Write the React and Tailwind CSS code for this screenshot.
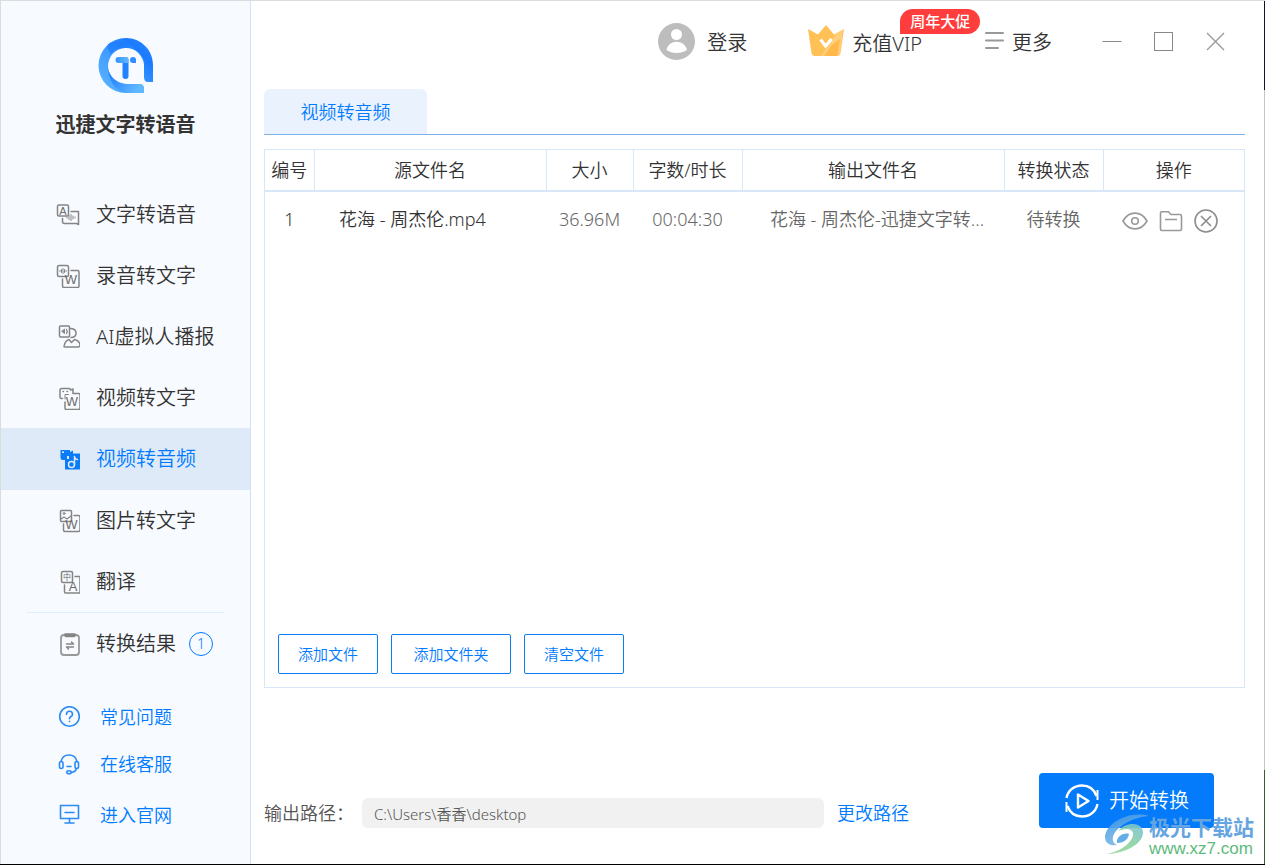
import { useState } from 'react'

const font = "font-['Noto_Sans','Noto_Sans_CJK_SC',sans-serif]"

function Logo() {
  return (
    <svg viewBox="0 0 56 56" className="size-14" aria-hidden="true">
      <defs>
        <linearGradient id="ring" x1="0" y1="1" x2="1" y2="0">
          <stop offset="0" stopColor="#5fb9ff" />
          <stop offset="0.45" stopColor="#3f9bff" />
          <stop offset="0.75" stopColor="#1a7bff" />
          <stop offset="1" stopColor="#2b88ff" />
        </linearGradient>
        <linearGradient id="tail" x1="0" y1="0" x2="1" y2="0.5">
          <stop offset="0" stopColor="#1677ff" />
          <stop offset="1" stopColor="#60b8ff" />
        </linearGradient>
        <linearGradient id="top" x1="0" y1="0" x2="1" y2="0.3">
          <stop offset="0" stopColor="#1273ff" />
          <stop offset="0.5" stopColor="#1a7bff" />
          <stop offset="1" stopColor="#4da8ff" />
        </linearGradient>
        <linearGradient id="bar" x1="0" y1="0" x2="1" y2="0">
          <stop offset="0" stopColor="#3394ff" />
          <stop offset="1" stopColor="#63b8ff" />
        </linearGradient>
      </defs>
      <path
        d="M28 0C43 0 55 12 55 27V44H50Q46 44 46 39V27A18 18 0 1 0 28 46H41Q46 46 46 51V55H28A27.500 27.500 0 0 1 28 0Z"
        fill="url(#ring)"
      />
      <path d="M10 30C11 45 20 55 30 55H46V51Q46 46 41 46H28C18 45 11 38 10 30Z" fill="url(#tail)" />
      <path d="M10 6C20 0 37 3 46 25A18 18 0 0 0 28 9C22 9 17 11 13 16C10 12 9 9 10 6Z" fill="url(#top)" opacity="0.55" />
      <rect x="24.500" y="19" width="6" height="22" rx="3" fill="#2383ff" />
      <path d="M17.500 22a3 3 0 0 1 3-3h8q2 0 2 3v3h-10a3 3 0 0 1-3-3Z" fill="url(#bar)" />
      <path d="M32 22a3 3 0 0 1 6 0v3h-3a3 3 0 0 1-3-3Z" fill="#2f8cff" />
    </svg>
  )
}

function IconBase({ children }) {
  return (
    <svg
      viewBox="0 0 24 24"
      className="size-6 shrink-0"
      fill="none"
      stroke="#858585"
      strokeWidth="1.5"
      strokeLinejoin="round"
      strokeLinecap="round"
      aria-hidden="true"
    >
      {children}
    </svg>
  )
}

function Letter({ x, y, size, children }) {
  return (
    <text
      x={x}
      y={y}
      fontSize={size}
      textAnchor="middle"
      fill="#6b6b6b"
      stroke="none"
      className="font-['Liberation_Sans','Noto_Sans_CJK_SC',sans-serif] font-normal"
    >
      {children}
    </text>
  )
}

function TextVoiceIcon() {
  return (
    <IconBase>
      <rect x="1.500" y="2" width="11" height="11" rx="1.500" />
      <Letter x={7} y={11.5} size={11}>A</Letter>
      <path d="M15 8.500h7.500v13l-2-1H8.500q-2 0-2-2V15.500" />
      <path d="M11 14v1M13 12.500v4M15 11.500v6M17 13v3M19 14v1" strokeWidth="1" />
    </IconBase>
  )
}

function VoiceTextIcon() {
  return (
    <IconBase>
      <rect x="1.500" y="1.500" width="11" height="11" rx="1.500" />
      <path d="M4 6.500v1M5.500 5.500v3M7 4.500v5M8.500 5.500v3M10 6.500v1" strokeWidth="1" />
      <path d="M15 6.500h6.500q1.500 0 1.500 1.500V22q0 1.500-1.500 1.500H8q-1.500 0-1.500-1.500v-7" />
      <Letter x={15} y={19.5} size={13}>W</Letter>
    </IconBase>
  )
}

function PersonIcon() {
  return (
    <IconBase>
      <rect x="3.500" y="1" width="10" height="11" rx="1" />
      <path d="M8.500 4.500v4L6 6.500zM10.500 4q2 2.500 0 5" strokeWidth="1" fill="#858585" />
      <path d="M14 3.500c8 0 8 9 1 9" />
      <path d="M8 21.500q1-6 5-7l2.500 3 3-3q5 1 5.500 5.500 0 2-2 2H9q-1 0-1-.5z" />
    </IconBase>
  )
}

function VideoTextIcon() {
  return (
    <IconBase>
      <path d="M6.500 12.500H5.500q-1.500 0-1.500-1.500V4q0-1.500 1.500-1.500H13q1.500 0 1.500 1.500l2.500-1V7" />
      <path d="M7 5.500h.5M11 5.500h.5" />
      <path d="M17 7.500h6q1 0 1 1V22q0 1.500-1.500 1.500h-12Q9 23.500 9 22v-6" />
      <path d="M9 13V8.500h3.500" strokeWidth="1" />
      <Letter x={16} y={20} size={13}>W</Letter>
    </IconBase>
  )
}

function VideoAudioIcon() {
  return (
    <IconBase>
      <path d="M4.500 3H14v2l3-1.500V9h-6v4H7q-2.500 0-2.500-2Z" fill="#0a7cf7" stroke="none" />
      <rect x="6" y="4.500" width="2" height="1.500" fill="#e6f1fd" stroke="none" />
      <path d="M13 6.500h12V22.500H9V12h4Z" fill="#0a7cf7" stroke="none" />
      <circle cx="15.500" cy="17.500" r="3" stroke="#deeaf8" />
      <path d="M18.500 17.500V9.500q.5 3 3 3" stroke="#deeaf8" />
    </IconBase>
  )
}

function ImageTextIcon() {
  return (
    <IconBase>
      <rect x="4.500" y="1.500" width="11" height="11" rx="1" />
      <path d="M5 10l3-2 3 2 4-3" strokeWidth="1.200" />
      <circle cx="8" cy="4.500" r="1" strokeWidth="1" />
      <path d="M18 6.500h4.500q1.500 0 1.500 1.500V21q0 1.500-1.500 1.500H9q-1.500 0-1.500-1.500v-6" />
      <Letter x={15.5} y={19.5} size={13}>W</Letter>
    </IconBase>
  )
}

function TranslateIcon() {
  return (
    <IconBase>
      <rect x="5.500" y="1.500" width="11" height="11" rx="1.500" />
      <Letter x={11} y={10} size={8}>中</Letter>
      <path d="M19 6.500h5v16.500H9.500Q8.500 23 8.500 22v-7" />
      <Letter x={17} y={20.5} size={13}>A</Letter>
    </IconBase>
  )
}

function ResultIcon() {
  return (
    <IconBase>
      <rect x="5" y="3" width="18" height="20" rx="3" strokeWidth="1.800" stroke="#999" />
      <path d="M9 2h10v1.500q0 1-1 1h-8q-1 0-1-1Z" fill="#858585" />
      <path d="M10.500 12h7l-2-2M17.500 15h-7l2 2" />
    </IconBase>
  )
}

const items = [
  { label: '文字转语音', icon: TextVoiceIcon },
  { label: '录音转文字', icon: VoiceTextIcon },
  { label: 'AI虚拟人播报', icon: PersonIcon },
  { label: '视频转文字', icon: VideoTextIcon },
  { label: '视频转音频', icon: VideoAudioIcon },
  { label: '图片转文字', icon: ImageTextIcon },
  { label: '翻译', icon: TranslateIcon }
]

function Sidebar() {
  const [active, setActive] = useState('视频转音频')

  return (
    <aside className="flex w-[251px] shrink-0 flex-col border-r border-l border-r-[#cfe2f7] border-l-[#dcdcdc] bg-[#f7faff]">
      <div className="flex flex-col items-center pt-[37px]">
        <Logo />
        <h1 className="mt-4 text-xl leading-[30px] font-bold text-[#333]">迅捷文字转语音</h1>
      </div>

      <nav className="mt-11 flex flex-col">
        {items.map(({ label, icon: Icon }) => (
          <button
            key={label}
            onClick={() => setActive(label)}
            className={
              active === label
                ? 'flex h-[62px] items-center gap-4 bg-[#deeaf8] pl-[55px] text-xl text-[#007bff]'
                : 'flex h-[61px] items-center gap-4 pl-[55px] text-xl text-[#333]'
            }
          >
            <Icon />
            {label}
          </button>
        ))}

        <div className="mx-[26px] h-px bg-[#e2edfb]" />

        <button className="flex h-[61px] items-center gap-4 pl-[55px] text-xl text-[#333]">
          <ResultIcon />
          转换结果
          <span className="-ml-[3px] flex size-6 items-center justify-center rounded-full border border-[#007bff] text-sm text-[#007bff]">
            1
          </span>
        </button>
      </nav>

      <div className="mt-[19px] flex flex-col text-lg text-[#007bff]">
        <a href="#faq" className="flex h-[47px] items-center gap-5 pl-[57px]">
          <svg viewBox="0 0 22 22" className="size-[22px]" fill="none" stroke="#2b8cf5" strokeWidth="1.600" strokeLinecap="round" aria-hidden="true">
            <circle cx="11.500" cy="10.500" r="9.800" />
            <path d="M8.500 8.500q0-3.200 3-3.200t3 3q0 1.700-1.800 2.500-1.200.6-1.200 2M11.500 15.300v.2" />
          </svg>
          常见问题
        </a>
        <a href="#service" className="flex h-[47px] items-center gap-5 pl-[57px]">
          <svg viewBox="0 0 22 22" className="size-[22px]" fill="none" stroke="#2b8cf5" strokeWidth="1.600" strokeLinecap="round" aria-hidden="true">
            <path d="M3 8.500C4 4 7 2 11 2S18 4 19 8.500" />
            <rect x="1.500" y="8.500" width="3.500" height="7" rx="1.700" />
            <rect x="17" y="8.500" width="3.500" height="7" rx="1.700" />
            <path d="M18.500 15.500q-1 3.500-5 4M9 13.500h4" />
            <ellipse cx="11" cy="19.300" rx="2.200" ry="1.500" />
          </svg>
          在线客服
        </a>
        <a href="#site" className="mt-1 flex h-[47px] items-center gap-5 pl-[57px]">
          <svg viewBox="0 0 22 22" className="size-[22px]" fill="none" stroke="#2b8cf5" strokeWidth="1.600" strokeLinecap="round" strokeLinejoin="round" aria-hidden="true">
            <rect x="2.500" y="1.500" width="18" height="13" />
            <path d="M7 8.500h9M11.500 14.500V18.500M7 19h9" />
          </svg>
          进入官网
        </a>
      </div>
    </aside>
  )
}

function TopBar() {
  return (
    <header className="flex h-20 items-center justify-end pr-[38px] text-xl text-[#333]">
      <button className="flex items-center gap-3">
        <svg viewBox="0 0 37 37" className="size-[37px]" aria-hidden="true">
          <circle cx="18.500" cy="18.500" r="18.500" fill="#bdbdbd" />
          <circle cx="18.500" cy="11.500" r="5.500" fill="#fff" />
          <path d="M8.500 27c2-11 18-11 20.500 0-6 4-15 4-20.500 0Z" fill="#fff" />
        </svg>
        <span className="pt-[3px]">登录</span>
      </button>

      <button className="relative ml-[61px] flex items-center gap-2">
        <svg viewBox="0 0 36 32" className="h-8 w-9" aria-hidden="true">
          <path d="M0 4l10 5.500L18 0l8 9.500L36 4l-3.500 24q-.5 3-3.500 3H7q-3 0-3.500-3Z" fill="#ffc056" />
          <path d="M28 9l7-4-3 23q-.5 3-3 3H13Z" fill="#ffd48a" opacity="0.700" />
          <path d="M24 20l8-6-2.500 17H16Z" fill="#ffb94a" />
          <path d="M12.500 14.500l5 6.500 6-7" fill="none" stroke="#fff" strokeWidth="3" />
        </svg>
        <span className="pt-[5px]">充值VIP</span>
        <span className="absolute -top-4 left-[92px] flex h-[25px] w-20 items-center justify-center rounded-t-full rounded-br-full rounded-bl-none bg-[#ff3d3d] text-[15px] font-medium text-white">
          周年大促
        </span>
      </button>

      <button className="ml-[62px] flex items-center gap-2">
        <svg viewBox="0 0 20 20" className="size-5" stroke="#999" strokeWidth="2" strokeLinecap="round" aria-hidden="true">
          <path d="M2 2h17M2 9.500h17M2 17h12" />
        </svg>
        <span className="pt-[3px]">更多</span>
      </button>

      <div className="ml-[50px] flex gap-8">
        <button aria-label="最小化" className="size-5">
          <svg viewBox="0 0 20 20" stroke="#888" aria-hidden="true">
            <path d="M.5 10.500h19" />
          </svg>
        </button>
        <button aria-label="最大化" className="size-5">
          <svg viewBox="0 0 20 20" fill="none" stroke="#888" aria-hidden="true">
            <rect x=".5" y="1.500" width="18" height="18" />
          </svg>
        </button>
        <button aria-label="关闭" className="size-5">
          <svg viewBox="0 0 20 20" stroke="#999" strokeWidth="1.300" aria-hidden="true">
            <path d="M1 2l17 17M18 2L1 19" />
          </svg>
        </button>
      </div>
    </header>
  )
}

function FileTable() {
  return (
    <table className="w-full table-fixed border-collapse text-center text-lg text-[#333]">
      <colgroup>
        <col className="w-[49px]" />
        <col className="w-[232px]" />
        <col className="w-[87px]" />
        <col className="w-[109px]" />
        <col />
        <col className="w-[99px]" />
        <col className="w-[141px]" />
      </colgroup>
      <thead>
        <tr className="h-[41px] border-b-2 border-[#d8e7f8] [&>th]:border-r [&>th]:border-[#d8e7f8] [&>th]:font-[350] [&>th:last-child]:border-r-0">
          <th>编号</th>
          <th>源文件名</th>
          <th>大小</th>
          <th>字数/时长</th>
          <th>输出文件名</th>
          <th>转换状态</th>
          <th>操作</th>
        </tr>
      </thead>
      <tbody>
        <tr className="h-[54px] text-[#666]">
          <td className="text-[#333]">1</td>
          <td className="pl-[25px] text-left text-[#333]">花海 - 周杰伦.mp4</td>
          <td>36.96M</td>
          <td>00:04:30</td>
          <td className="pl-2 whitespace-nowrap">花海 - 周杰伦-迅捷文字转...</td>
          <td>待转换</td>
          <td>
            <div className="flex items-center justify-center gap-[11px] pt-1 pr-2">
              <button aria-label="预览">
                <svg viewBox="0 0 26 24" className="h-6 w-[26px]" fill="none" stroke="#999" strokeWidth="1.600" aria-hidden="true">
                  <path d="M1 12C7 1.500 19 1.500 25 12 19 22.500 7 22.500 1 12Z" />
                  <circle cx="13" cy="12" r="3.300" />
                </svg>
              </button>
              <button aria-label="打开文件夹">
                <svg viewBox="0 0 24 24" className="size-6" fill="none" stroke="#999" strokeWidth="1.600" strokeLinejoin="round" aria-hidden="true">
                  <path d="M1.500 4q0-1.200 1.200-1.200H9.500l2.500 2.700h9q1.500 0 1.500 1.500v13q0 1.500-1.500 1.500H3q-1.500 0-1.500-1.500ZM6 10.500h12" />
                </svg>
              </button>
              <button aria-label="删除">
                <svg viewBox="0 0 24 24" className="size-6" fill="none" stroke="#8c8c8c" strokeWidth="1.600" aria-hidden="true">
                  <circle cx="12" cy="12" r="11" />
                  <path d="M7 7l10 10M17 7L7 17" />
                </svg>
              </button>
            </div>
          </td>
        </tr>
      </tbody>
    </table>
  )
}

function Watermark() {
  return (
    <div className="pointer-events-none absolute right-[11px] bottom-[7px] flex items-center">
      <svg viewBox="0 0 46 42" className="h-[42px] w-[46px]" aria-hidden="true">
        <defs>
          <linearGradient id="swirl" x1="0" y1="0" x2="0.500" y2="1">
            <stop offset="0" stopColor="#3c96e4" />
            <stop offset="1" stopColor="#7fbbe8" />
          </linearGradient>
          <linearGradient id="leaf" x1="1" y1="0" x2="0" y2="1">
            <stop offset="0" stopColor="#7cc3d8" />
            <stop offset="0.500" stopColor="#8ad2a0" />
            <stop offset="1" stopColor="#9cdc9c" />
          </linearGradient>
        </defs>
        <path d="M46 2C26-4 3 9 2 23c0 7 6 9 12 8C8 28 8 21 16 14 24 7 34 3 46 2Z" fill="url(#swirl)" opacity="0.900" />
        <path d="M15 17C22 9 33 8 38 13c8 10-8 26-34 27 15-3 27-13 26-21-2-6-10-4-15-2Z" fill="url(#leaf)" opacity="0.900" />
        <path d="M14 29c-1-6 6-11 12-9-1 6-6 9-12 9Z" fill="#62aee6" />
      </svg>
      <div className="font-bold">
        <p className="text-[21px] leading-7 text-[#66a5e0]">极光下载站</p>
        <p className="font-['Liberation_Sans',sans-serif] text-[17px] leading-4 font-normal text-[#5dba7c]">www.xz7.com</p>
      </div>
    </div>
  )
}

function App() {
  return (
    <div className={`${font} relative flex min-h-screen border-t border-b border-t-[#dcdcdc] border-b-black bg-white font-[350]`}>
      <Sidebar />

      <main className="flex min-w-0 flex-1 flex-col pl-[13px]">
        <TopBar />

        <div className="mt-2 mr-[19px] border-b border-[#7fb2e8]">
          <button className="h-[45px] w-[163px] rounded-t-md bg-[#eaf2fe] text-lg text-[#007bff]">
            视频转音频
          </button>
        </div>

        <section className="mt-[14px] mr-[19px] flex flex-1 flex-col justify-between border border-[#d8e7f8]">
          <FileTable />

          <div className="flex gap-[13px] px-[13px] pb-[13px] text-[15px] text-[#007bff]">
            <button className="h-10 w-[100px] rounded-xs border border-[#0a7cf7]">添加文件</button>
            <button className="h-10 w-[120px] rounded-xs border border-[#0a7cf7]">添加文件夹</button>
            <button className="h-10 w-[100px] rounded-xs border border-[#0a7cf7]">清空文件</button>
          </div>
        </section>

        <footer className="mt-[85px] mr-[50px] flex items-end justify-between pb-9 text-lg">
          <div className="flex h-[30px] flex-1 items-center">
            <label htmlFor="path" className="w-[98px] shrink-0 text-[#555]">输出路径：</label>
            <input
              id="path"
              readOnly
              defaultValue="C:\Users\香香\desktop"
              className="h-[30px] w-full max-w-[462px] rounded-md bg-[#f1f1f1] px-3 text-[15px] text-[#555]"
            />
            <button className="ml-[13px] shrink-0 text-[#007bff]">更改路径</button>
          </div>

          <button className="flex h-[55px] w-[175px] items-center gap-[10px] rounded-[4px] bg-[#037bfa] pl-[26px] text-xl text-white">
            <svg viewBox="0 0 34 34" className="size-[34px]" fill="none" stroke="#fff" strokeWidth="2.400" aria-hidden="true">
              <path d="M1.500 14C3 6 9.500 1.500 17 1.500S29 5 31.500 12M32.500 20C31 28 24.500 32.500 17 32.500S5 29 2.500 22" />
              <path d="M32.500 6v10M1.500 28V18" strokeWidth="2" />
              <path d="M13 10.500v13L23.500 17Z" strokeLinejoin="round" />
            </svg>
            开始转换
          </button>
        </footer>
      </main>

      {/* window edge */}
      <div className="flex w-px shrink-0 flex-col">
        <div className="h-[89px] bg-[#0d1526]" />
        <div className="flex-1 bg-[#c4c4c4]" />
        <div className="h-[94px] bg-[#3c5a30]" />
      </div>

      <Watermark />
    </div>
  )
}

export default App
